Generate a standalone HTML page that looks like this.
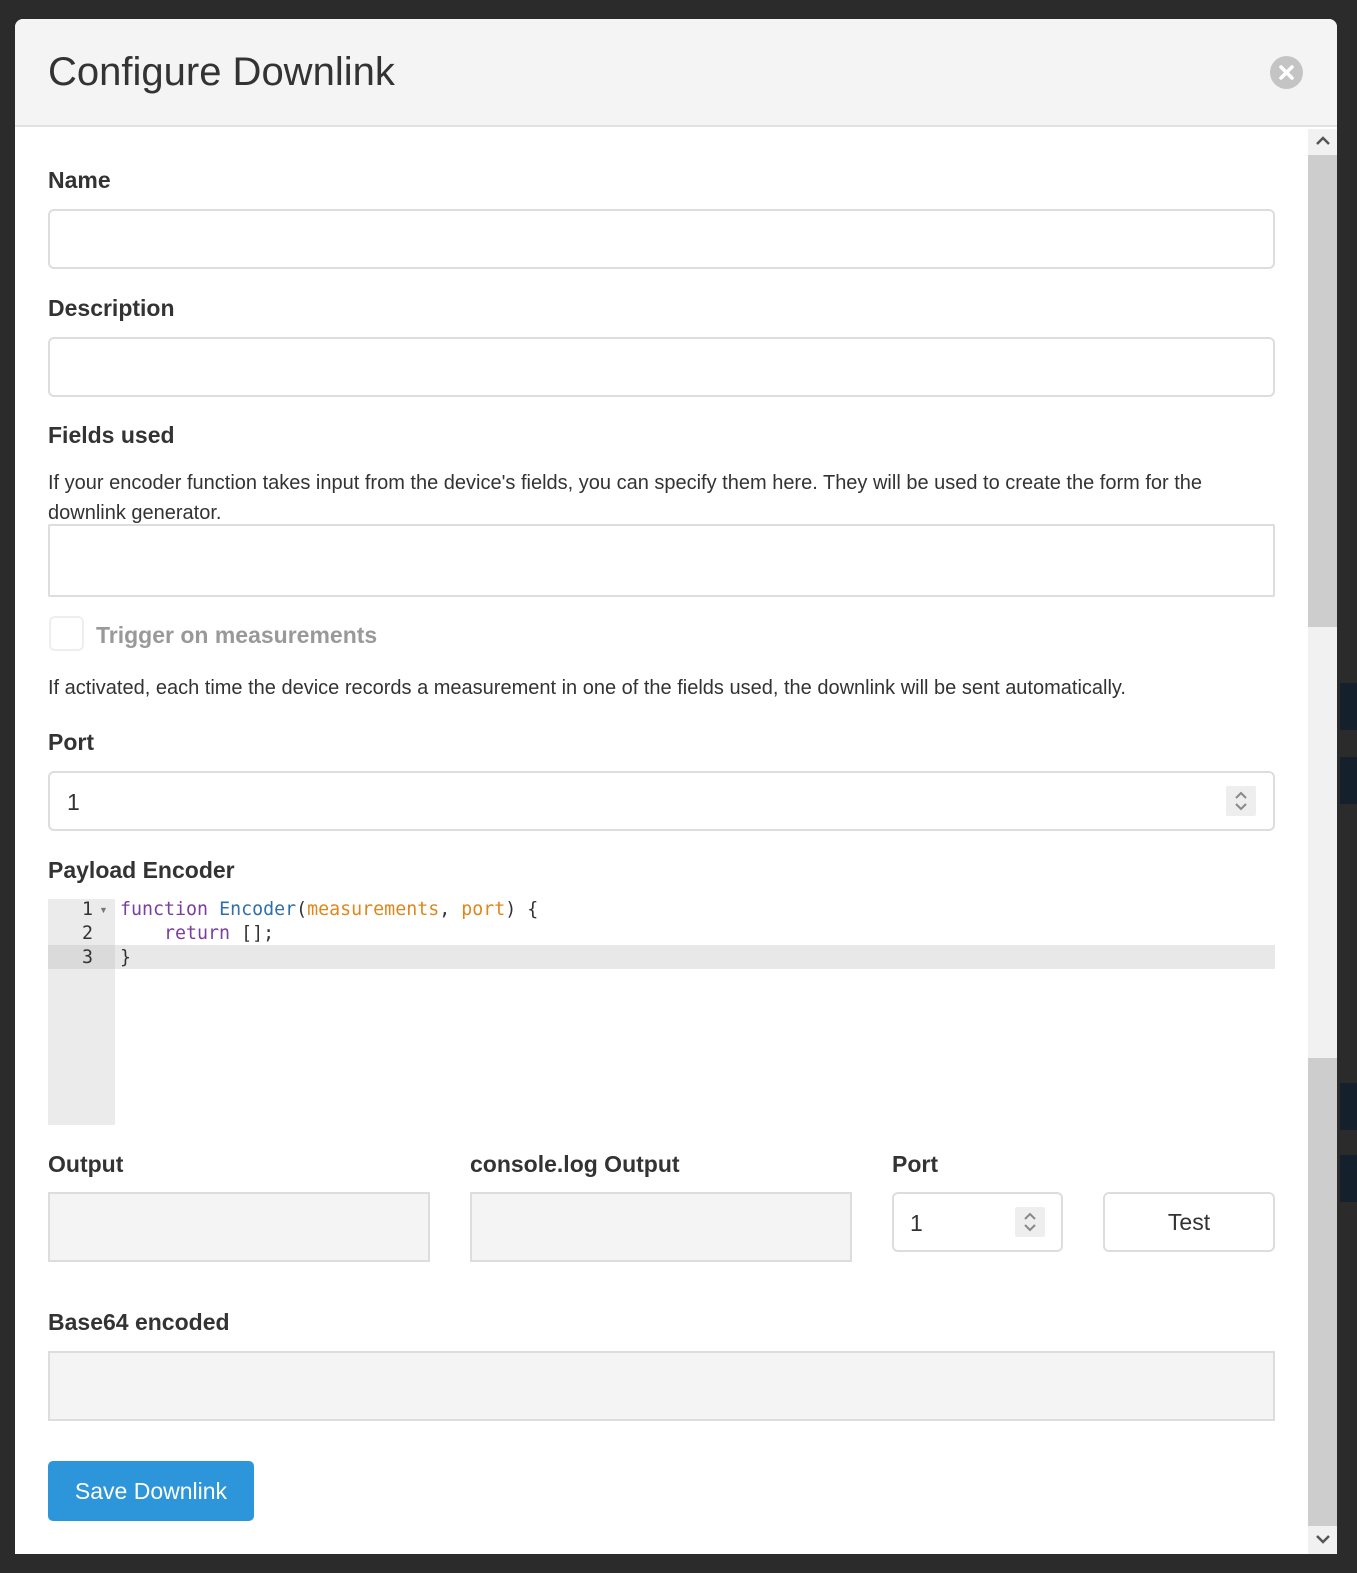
<!DOCTYPE html>
<html><head><meta charset="utf-8"><style>
*{box-sizing:border-box;margin:0;padding:0}
body{width:1357px;height:1573px;background:#2b2b2b;position:relative;overflow:hidden;font-family:"Liberation Sans",sans-serif;color:#333}
.a{position:absolute}
.modal{left:15px;top:19px;width:1322px;height:1535px;background:#fff;border-radius:8px 8px 0 0;overflow:hidden}
.hdr{left:0;top:0;width:1322px;height:108px;background:#f4f4f4;border-bottom:2px solid #e2e2e2}
.lbl{font-weight:bold;font-size:23px;color:#333}
.inp{border:2px solid #ddd;border-radius:6px;background:#fff}
.txt{font-size:20px;color:#333}
.ro{background:#f4f4f4;border:2px solid #ddd}
.mono{font-family:"DejaVu Sans Mono","Liberation Mono",monospace;font-size:18.3px;line-height:24px;white-space:pre}
.spin{background:#eee;width:30px;height:30px;border-radius:2px}
</style></head><body>
<div class="a" style="left:1340px;top:683px;width:17px;height:47px;background:#14202c"></div>
<div class="a" style="left:1340px;top:757px;width:17px;height:47px;background:#14202c"></div>
<div class="a" style="left:1340px;top:1083px;width:17px;height:47px;background:#14202c"></div>
<div class="a" style="left:1340px;top:1155px;width:17px;height:47px;background:#14202c"></div>
<div class="a modal">
 <div class="a hdr"></div>
 <div class="a" style="left:33px;top:31px;font-size:40px;color:#333">Configure Downlink</div>
 <div class="a" style="left:1255px;top:37px;width:33px;height:33px;border-radius:50%;background:#c4c4c4"><svg width="33" height="33"><path d="M11 11L22 22M22 11L11 22" stroke="#fff" stroke-width="3.5" stroke-linecap="round"/></svg></div>
 <div class="a" style="left:1293px;top:110px;width:29px;height:1425px;background:#f1f1f1"></div>
 <div class="a" style="left:1293px;top:136px;width:29px;height:472px;background:#cdcdcd"></div>
 <div class="a" style="left:1293px;top:1039px;width:29px;height:468px;background:#cdcdcd"></div>
 <svg class="a" style="left:1300px;top:116px" width="16" height="12"><path d="M2 9L8 3L14 9" stroke="#555" stroke-width="2.5" fill="none"/></svg>
 <svg class="a" style="left:1300px;top:1514px" width="16" height="12"><path d="M2 3L8 9L14 3" stroke="#555" stroke-width="2.5" fill="none"/></svg>

 <div class="a lbl" style="left:33px;top:148px">Name</div>
 <div class="a inp" style="left:33px;top:190px;width:1227px;height:60px"></div>
 <div class="a lbl" style="left:33px;top:276px">Description</div>
 <div class="a inp" style="left:33px;top:318px;width:1227px;height:60px"></div>
 <div class="a lbl" style="left:33px;top:403px">Fields used</div>
 <div class="a txt" style="left:33px;top:449px;width:1190px;line-height:30px">If your encoder function takes input from the device's fields, you can specify them here. They will be used to create the form for the downlink generator.</div>
 <div class="a inp" style="left:33px;top:505px;width:1227px;height:73px;border-radius:2px"></div>
 <div class="a" style="left:34px;top:597px;width:35px;height:35px;border:2px solid #eee;border-radius:6px"></div>
 <div class="a lbl" style="left:81px;top:603px;color:#999">Trigger on measurements</div>
 <div class="a txt" style="left:33px;top:658px">If activated, each time the device records a measurement in one of the fields used, the downlink will be sent automatically.</div>
 <div class="a lbl" style="left:33px;top:710px">Port</div>
 <div class="a inp" style="left:33px;top:752px;width:1227px;height:60px"></div>
 <div class="a" style="left:52px;top:770px;font-size:23px">1</div>
 <div class="a spin" style="left:1211px;top:767px"></div>
 <svg class="a" style="left:1211px;top:767px" width="30" height="30"><path d="M10 12L15 7L20 12M10 18L15 23L20 18" stroke="#888" stroke-width="2" fill="none"/></svg>
 <div class="a lbl" style="left:33px;top:838px">Payload Encoder</div>
 <div class="a" style="left:33px;top:880px;width:67px;height:226px;background:#ebebeb"></div>
 <div class="a" style="left:33px;top:926px;width:1227px;height:24px;background:#e8e8e8"></div>
 <div class="a" style="left:33px;top:926px;width:67px;height:24px;background:#dadada"></div>
 <div class="a mono" style="left:67px;top:879px;color:#333">1
2
3</div>
 <div class="a" style="left:84px;top:886px;font-size:9px;color:#777">▼</div>
 <div class="a mono" style="left:105px;top:879px"><span style="color:#7a3e9d">function</span> <span style="color:#2f6fab">Encoder</span>(<span style="color:#e0861a">measurements</span>, <span style="color:#e0861a">port</span>) {
    <span style="color:#7a3e9d">return</span> [];
}</div>
 <div class="lbl a" style="left:33px;top:1132px">Output</div>
 <div class="a ro" style="left:33px;top:1173px;width:382px;height:70px"></div>
 <div class="lbl a" style="left:455px;top:1132px">console.log Output</div>
 <div class="a ro" style="left:455px;top:1173px;width:382px;height:70px"></div>
 <div class="lbl a" style="left:877px;top:1132px">Port</div>
 <div class="a inp" style="left:877px;top:1173px;width:171px;height:60px"></div>
 <div class="a" style="left:895px;top:1191px;font-size:23px">1</div>
 <div class="a spin" style="left:1000px;top:1188px"></div>
 <svg class="a" style="left:1000px;top:1188px" width="30" height="30"><path d="M10 12L15 7L20 12M10 18L15 23L20 18" stroke="#888" stroke-width="2" fill="none"/></svg>
 <div class="a inp" style="left:1088px;top:1173px;width:172px;height:60px;text-align:center;line-height:56px;font-size:23px">Test</div>
 <div class="lbl a" style="left:33px;top:1290px">Base64 encoded</div>
 <div class="a ro" style="left:33px;top:1332px;width:1227px;height:70px"></div>
 <div class="a" style="left:33px;top:1442px;width:206px;height:60px;background:#2d95d9;border-radius:5px;color:#fff;font-size:23px;text-align:center;line-height:60px">Save Downlink</div>
</div>
</body></html>
